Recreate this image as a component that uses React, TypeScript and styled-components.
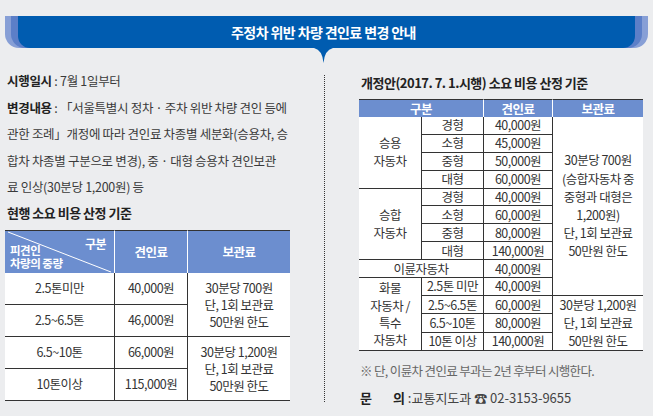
import React from "react";
import styled, { createGlobalStyle } from "styled-components";

const GlobalStyle = createGlobalStyle`
    * {
        box-sizing: border-box;
    }
    body {
        margin: 0;
        background: #ecedef;
    }
`;

const App = () => {
    return (
        <>
            <GlobalStyle />
            <Page>
                <BannerBand $tone="#879fd6" $outer>
                    <BannerBand $tone="#5c7fc8">
                        <BannerMain>
                            <BannerTitle>주정차 위반 차량 견인료 변경 안내</BannerTitle>
                            <Pointer viewBox="0 0 19 15">
                                <path d="M0 0 Q8.5 2 9.5 15 Q10.5 2 19 0 Z" fill="#005cb0" />
                            </Pointer>
                        </BannerMain>
                    </BannerBand>
                </BannerBand>

                <Content>
                    <LeftCol>
                        <Para>
                            <Label>시행일시</Label> : 7월 1일부터
                            <br />
                            <Label>변경내용</Label> : 「서울특별시 정차 · 주차 위반 차량 견인 등에
                            <br />
                            관한 조례」개정에 따라 견인료 차종별 세분화(승용차, 승
                            <br />
                            합차 차종별 구분으로 변경), 중 · 대형 승용차 견인보관
                            <br />
                            료 인상(30분당 1,200원) 등
                        </Para>
                        <SectionTitle $top={2}>현행 소요 비용 산정 기준</SectionTitle>
                        <Table $width={285}>
                            <thead>
                                <Row $h={43}>
                                    <CornerTh $w={109} $edge>
                                        <Diagonal viewBox="0 0 109 42" preserveAspectRatio="none">
                                            <line x1="3" y1="1" x2="106" y2="41" stroke="#fff" strokeWidth="1" />
                                        </Diagonal>
                                        <CornerTop>구분</CornerTop>
                                        <CornerBottom>
                                            피견인
                                            <br />
                                            차량의 중량
                                        </CornerBottom>
                                    </CornerTh>
                                    <Th $w={73}>견인료</Th>
                                    <Th $w={103}>보관료</Th>
                                </Row>
                            </thead>
                            <tbody>
                                <Row $h={32}>
                                    <Td $edge>2.5톤미만</Td>
                                    <Td>40,000원</Td>
                                    <Td rowSpan={2} $lh={17}>
                                        30분당 700원
                                        <br />
                                        단, 1회 보관료
                                        <br />
                                        50만원 한도
                                    </Td>
                                </Row>
                                <Row $h={32}>
                                    <Td $edge>2.5~6.5톤</Td>
                                    <Td>46,000원</Td>
                                </Row>
                                <Row $h={32}>
                                    <Td $edge>6.5~10톤</Td>
                                    <Td>66,000원</Td>
                                    <Td rowSpan={2} $lh={17}>
                                        30분당 1,200원
                                        <br />
                                        단, 1회 보관료
                                        <br />
                                        50만원 한도
                                    </Td>
                                </Row>
                                <Row $h={32}>
                                    <Td $edge>10톤이상</Td>
                                    <Td>115,000원</Td>
                                </Row>
                            </tbody>
                        </Table>
                    </LeftCol>

                    <Divider />

                    <RightCol>
                        <SectionTitle $top={0} $bottom={6}>
                            개정안(2017. 7. 1.시행) 소요 비용 산정 기준
                        </SectionTitle>
                        <Table $width={284}>
                            <thead>
                                <Row $h={18}>
                                    <Th $w={124} colSpan={2} $edge>
                                        구분
                                    </Th>
                                    <Th $w={69}>견인료</Th>
                                    <Th $w={91}>보관료</Th>
                                </Row>
                            </thead>
                            <tbody>
                                <Row $h={17.9}>
                                    <Td $edge rowSpan={4} $lh={18}>
                                        승용
                                        <br />
                                        자동차
                                    </Td>
                                    <Td>경형</Td>
                                    <Td>40,000원</Td>
                                    <Td rowSpan={10} $lh={18.2}>
                                        30분당 700원
                                        <br />
                                        (승합자동차 중
                                        <br />
                                        중형과 대형은
                                        <br />
                                        1,200원)
                                        <br />
                                        단, 1회 보관료
                                        <br />
                                        50만원 한도
                                    </Td>
                                </Row>
                                <Row $h={17.9}>
                                    <Td>소형</Td>
                                    <Td>45,000원</Td>
                                </Row>
                                <Row $h={17.9}>
                                    <Td>중형</Td>
                                    <Td>50,000원</Td>
                                </Row>
                                <Row $h={17.9}>
                                    <Td>대형</Td>
                                    <Td>60,000원</Td>
                                </Row>
                                <Row $h={17.9}>
                                    <Td $edge rowSpan={4} $lh={18}>
                                        승합
                                        <br />
                                        자동차
                                    </Td>
                                    <Td>경형</Td>
                                    <Td>40,000원</Td>
                                </Row>
                                <Row $h={17.9}>
                                    <Td>소형</Td>
                                    <Td>60,000원</Td>
                                </Row>
                                <Row $h={17.9}>
                                    <Td>중형</Td>
                                    <Td>80,000원</Td>
                                </Row>
                                <Row $h={17.9}>
                                    <Td>대형</Td>
                                    <Td>140,000원</Td>
                                </Row>
                                <Row $h={17.9}>
                                    <Td $edge colSpan={2}>
                                        이륜자동차
                                    </Td>
                                    <Td>40,000원</Td>
                                </Row>
                                <Row $h={17.9}>
                                    <Td $edge rowSpan={4} $lh={17.4}>
                                        화물
                                        <br />
                                        자동차 /
                                        <br />
                                        특수
                                        <br />
                                        자동차
                                    </Td>
                                    <Td>2.5톤 미만</Td>
                                    <Td>40,000원</Td>
                                </Row>
                                <Row $h={17.9}>
                                    <Td>2.5~6.5톤</Td>
                                    <Td>60,000원</Td>
                                    <Td rowSpan={3} $lh={18}>
                                        30분당 1,200원
                                        <br />
                                        단, 1회 보관료
                                        <br />
                                        50만원 한도
                                    </Td>
                                </Row>
                                <Row $h={17.9}>
                                    <Td>6.5~10톤</Td>
                                    <Td>80,000원</Td>
                                </Row>
                                <Row $h={17.9}>
                                    <Td>10톤 이상</Td>
                                    <Td>140,000원</Td>
                                </Row>
                            </tbody>
                        </Table>
                        <Note>※ 단, 이륜차 견인료 부과는 2년 후부터 시행한다.</Note>
                        <Contact>
                            <Label $gap={21}>문</Label>
                            <Label>의</Label> :교통지도과 ☎ 02-3153-9655
                        </Contact>
                    </RightCol>
                </Content>
            </Page>
        </>
    );
};

export default App;

const Page = styled.div`
    padding-top: 16px;
    font-family: "Noto Sans CJK KR", "Noto Sans", sans-serif;
    color: #333;
`;

const BannerBand = styled.div<{ $tone: string; $outer?: boolean }>`
    margin: ${(p) => (p.$outer ? "0 5px" : "0")};
    padding: 0 ${(p) => (p.$outer ? 6 : 7)}px;
    background: ${(p) => p.$tone};
    border-radius: 0 0 14px 14px;
`;

const BannerMain = styled.div`
    position: relative;
    height: 32px;
    background: #005cb0;
    border-radius: 0 0 12px 12px;
    display: flex;
    align-items: center;
    justify-content: center;
`;

const BannerTitle = styled.div`
    color: #fff;
    font-size: 14px;
    font-weight: 700;
    letter-spacing: -0.6px;
    margin-left: -6px;
`;

const Pointer = styled.svg`
    position: absolute;
    left: calc(50% - 13px);
    bottom: -15px;
    width: 19px;
    height: 15px;
`;

const Content = styled.div`
    display: flex;
    margin-top: 20px;
    padding-left: 5px;
`;

const LeftCol = styled.div`
    width: 285px;
    flex: none;
`;

const Para = styled.div`
    padding-left: 2px;
    font-size: 12.5px;
    letter-spacing: -0.3px;
    line-height: 26.6px;
    white-space: nowrap;
    color: #3a3a3a;
`;

const Label = styled.span<{ $gap?: number }>`
    font-weight: 700;
    color: #222;
    margin-right: ${(p) => p.$gap ?? 0}px;
`;

const SectionTitle = styled.div<{ $top: number; $bottom?: number }>`
    margin-top: ${(p) => p.$top}px;
    margin-bottom: ${(p) => p.$bottom ?? 7}px;
    padding-left: 2px;
    font-size: 13px;
    font-weight: 700;
    letter-spacing: -0.5px;
    line-height: 20px;
    color: #222;
    white-space: nowrap;
`;

const Divider = styled.div`
    flex: none;
    width: 0;
    height: 327px;
    margin: 7px 34px 0 34px;
    border-left: 1px dotted #333;
`;

const RightCol = styled.div`
    width: 284px;
    flex: none;
    padding-top: 5px;
`;

const Table = styled.table<{ $width: number }>`
    width: ${(p) => p.$width}px;
    table-layout: fixed;
    border-collapse: separate;
    border-spacing: 0;
    font-size: 12.5px;
    letter-spacing: -0.5px;
`;

const Row = styled.tr<{ $h: number }>`
    height: ${(p) => p.$h}px;
`;

const Th = styled.th<{ $w: number; $edge?: boolean }>`
    width: ${(p) => p.$w}px;
    padding: 0;
    background: #6c8ecf;
    color: #fff;
    font-weight: 700;
    line-height: 16px;
    text-align: center;
    border-top: 1px solid #333;
    border-left: ${(p) => (p.$edge ? "none" : "1px solid #fff")};
`;

const CornerTh = styled(Th)`
    position: relative;
    vertical-align: top;
    text-align: left;
    font-size: 11.5px;
`;

const Diagonal = styled.svg`
    position: absolute;
    left: 0;
    top: 0;
    width: 100%;
    height: 100%;
`;

const CornerTop = styled.div`
    padding: 6px 8px 0 0;
    font-size: 12px;
    line-height: 13px;
    text-align: right;
`;

const CornerBottom = styled.div`
    margin-top: -6px;
    padding-left: 5px;
    line-height: 13px;
`;

const Td = styled.td<{ $edge?: boolean; $lh?: number }>`
    padding: 0;
    background: #fff;
    text-align: center;
    vertical-align: middle;
    line-height: ${(p) => p.$lh ?? 16}px;
    color: #333;
    white-space: nowrap;
    border-bottom: 1px solid #333;
    border-left: ${(p) => (p.$edge ? "none" : "1px solid #333")};
`;

const Note = styled.div`
    margin-top: 10px;
    padding-left: 1px;
    font-size: 12.5px;
    letter-spacing: -0.65px;
    line-height: 20px;
    color: #666;
    white-space: nowrap;
`;

const Contact = styled.div`
    margin-top: 7px;
    padding-left: 1px;
    font-size: 13px;
    letter-spacing: 0;
    line-height: 20px;
    color: #444;
    white-space: nowrap;
`;
